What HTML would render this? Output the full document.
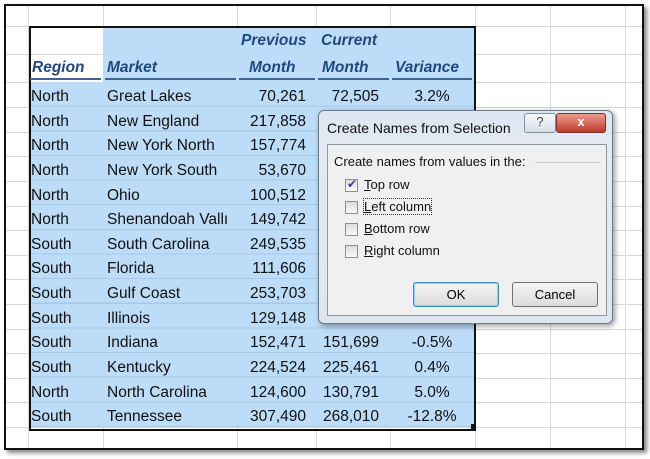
<!DOCTYPE html>
<html><head><style>
body{margin:0;width:650px;height:459px;background:#fff;position:relative;overflow:hidden;font-family:"Liberation Sans",sans-serif;}
.frame{position:absolute;left:4px;top:4px;width:636px;height:442px;border:2px solid #111;box-shadow:3px 3px 4px #888;background:#fff;overflow:hidden}
.vl{position:absolute;top:0;bottom:0;width:1px;background:#d8d8d8}
.hl{position:absolute;left:0;right:0;height:1px;background:#d8d8d8}
.sel{position:absolute;left:23px;top:20px;width:443px;height:401px;border:2px solid #111;}
.blue{position:absolute;background:#bcdcf8}
.c{position:absolute;font-size:15.5px;color:#111;line-height:24px;white-space:nowrap}
.h{position:absolute;font-size:15.5px;font-weight:bold;font-style:italic;color:#1f497d;line-height:26px;white-space:nowrap}
.ul{position:absolute;height:2px;background:#3a6496;top:72px}
.dlg{position:absolute;left:318px;top:110px;width:293px;height:212px;background:linear-gradient(#dbe6f2,#e4eaf0 40px,#dfe6ee);border:1px solid #6a7a8a;border-radius:6px;box-shadow:2px 2px 6px rgba(0,0,0,.4)}
.panel{position:absolute;left:8px;top:33px;width:278px;height:170px;background:#f0f0f0;border:1px solid #8a99a8}
.t{position:absolute;font-size:13px;color:#111;white-space:nowrap}
.cb{position:absolute;width:11px;height:11px;border:1px solid #8e8f8f;background:linear-gradient(#dcdcdc,#fafafa)}
.btn{position:absolute;top:137px;width:84px;height:23px;border:1px solid #707070;border-radius:3px;background:linear-gradient(#f4f4f4,#dcdcdc);font-size:13px;text-align:center;line-height:23px}
</style></head><body>
<div class="frame">
<div class="vl" style="left:22px"></div><div class="vl" style="left:97px"></div><div class="vl" style="left:231px"></div><div class="vl" style="left:310px"></div><div class="vl" style="left:384px"></div><div class="vl" style="left:469px"></div><div class="vl" style="left:544px"></div><div class="vl" style="left:619px"></div>
<div class="hl" style="top:20px"></div><div class="hl" style="top:48px"></div><div class="hl" style="top:76px"></div>
<div class="hl" style="top:101px"></div><div class="hl" style="top:126px"></div><div class="hl" style="top:150px"></div><div class="hl" style="top:175px"></div><div class="hl" style="top:200px"></div><div class="hl" style="top:224px"></div><div class="hl" style="top:249px"></div><div class="hl" style="top:273px"></div><div class="hl" style="top:298px"></div><div class="hl" style="top:323px"></div><div class="hl" style="top:347px"></div><div class="hl" style="top:372px"></div><div class="hl" style="top:396px"></div><div class="hl" style="top:421px"></div>
<div class="blue" style="left:97px;top:20px;width:371px;height:56px"></div>
<div class="blue" style="left:23px;top:76px;width:445px;height:345px;background:repeating-linear-gradient(#bcdcf8 0,#bcdcf8 23.6px,#a9c8e6 23.6px,#a9c8e6 24.64px)"></div>
<div class="sel"></div>
<div style="position:absolute;left:465px;top:418px;width:5px;height:5px;background:#111"></div>
<div class="h" style="left:235px;top:22px">Previous</div><div class="h" style="left:315px;top:22px">Current</div>
<div class="h" style="left:26px;top:49px">Region</div><div class="h" style="left:101px;top:49px">Market</div><div class="h" style="left:243px;top:49px">Month</div><div class="h" style="left:316px;top:49px">Month</div><div class="h" style="left:389px;top:49px">Variance</div>
<div class="ul" style="left:24px;width:71px"></div><div class="ul" style="left:99px;width:131px"></div><div class="ul" style="left:233px;width:76px"></div><div class="ul" style="left:312px;width:71px"></div><div class="ul" style="left:386px;width:80px"></div>
<div id="rows"></div>
</div>
<div class="dlg">
<div class="t" style="left:8px;top:9px;font-size:14px">Create Names from Selection</div>
<div style="position:absolute;left:205px;top:2px;width:30px;height:18px;border:1px solid #8090a0;border-radius:3px;background:linear-gradient(#f6f8fa,#d8e0e8);font-size:13px;text-align:center;color:#444">?</div>
<div style="position:absolute;left:237px;top:2px;width:48px;height:18px;border:1px solid #7a3030;border-radius:3px;background:linear-gradient(#e8a090,#c0392b);font-size:13px;font-weight:bold;text-align:center;color:#fff">x</div>
<div class="panel">
<div class="t" style="left:6px;top:9px">Create names from values in the:</div>
<div style="position:absolute;left:207px;top:17px;width:66px;height:1px;background:#d0d0d0"></div>
<div class="cb" style="left:17px;top:34px"><span style="position:absolute;left:1px;top:-3px;font-size:12px;color:#2a4a9a">✔</span></div><div class="t" style="left:36px;top:32px"><u>T</u>op row</div>
<div class="cb" style="left:17px;top:56px"></div><div class="t" style="left:36px;top:54px;outline:1px dotted #333"><u>L</u>eft column</div>
<div class="cb" style="left:17px;top:78px"></div><div class="t" style="left:36px;top:76px"><u>B</u>ottom row</div>
<div class="cb" style="left:17px;top:100px"></div><div class="t" style="left:36px;top:98px"><u>R</u>ight column</div>
<div class="btn" style="left:85px;border-color:#3c8fb8;box-shadow:inset 0 0 0 1px #8fd0f0">OK</div>
<div class="btn" style="left:184px">Cancel</div>
</div>
</div>
<script>
var d=[["North","Great Lakes","70,261","72,505","3.2%"],["North","New England","217,858","",""],["North","New York North","157,774","",""],["North","New York South","53,670","",""],["North","Ohio","100,512","",""],["North","Shenandoah Vall\u0131","149,742","",""],["South","South Carolina","249,535","",""],["South","Florida","111,606","",""],["South","Gulf Coast","253,703","",""],["South","Illinois","129,148","",""],["South","Indiana","152,471","151,699","-0.5%"],["South","Kentucky","224,524","225,461","0.4%"],["North","North Carolina","124,600","130,791","5.0%"],["South","Tennessee","307,490","268,010","-12.8%"]];
var h="";d.forEach(function(r,i){var y=79+i*24.64;
h+='<div class="c" style="left:25px;top:'+y+'px">'+r[0]+'</div><div class="c" style="left:101px;top:'+y+'px;width:128px;overflow:hidden">'+r[1]+'</div><div class="c" style="left:232px;width:68px;text-align:right;top:'+y+'px">'+r[2]+'</div><div class="c" style="left:310px;width:63px;text-align:right;top:'+y+'px">'+r[3]+'</div><div class="c" style="left:384px;width:84px;text-align:center;top:'+y+'px">'+r[4]+'</div>';});
document.getElementById("rows").innerHTML=h;
</script>
</body></html>
